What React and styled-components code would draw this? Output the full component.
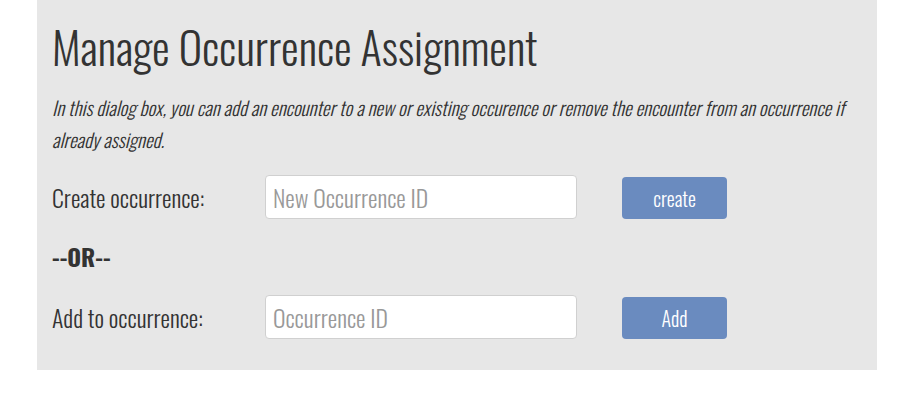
import React from "react";
import styled, { createGlobalStyle } from "styled-components";

const Global = createGlobalStyle`
  html, body { margin: 0; padding: 0; background: #fff; }
  body { font-family: "Oswald", "Roboto Condensed", "Liberation Sans", sans-serif; font-weight: 300; color: #333; }
`;

const Panel = styled.div`
  margin-left: 37px;
  width: 840px;
  height: 370px;
  box-sizing: border-box;
  background: #e7e7e7;
  padding: 16px 15px 0 15px;
`;

const Title = styled.h2`
  margin: 0;
  font-size: 44.5px;
  font-weight: 300;
  line-height: 60px;
  color: #333;
`;

const Intro = styled.p`
  margin: 16px 0 0;
  font-style: italic;
  font-size: 19.3px;
  line-height: 32px;
  color: #333;
`;

const Row = styled.div`
  display: flex;
  align-items: flex-end;
  margin-top: ${(p) => p.$mt}px;
`;

const Label = styled.label`
  align-self: center;
  width: 213px;
  font-size: 23.8px;
`;

const Input = styled.input`
  width: 312px;
  height: 44px;
  box-sizing: border-box;
  border: 1px solid #d0d0d0;
  border-radius: 4px;
  background: #fff;
  padding: 0 7px;
  font-family: inherit;
  font-weight: 300;
  font-size: 23.8px;
  color: #333;
  &::placeholder { color: #999; }
`;

const Button = styled.button`
  margin-left: 45px;
  width: 105px;
  height: 42px;
  border: none;
  border-radius: 4px;
  background: #6a8bbf;
  color: #fff;
  font-family: inherit;
  font-weight: 300;
  font-size: 20px;
`;

const Or = styled.div`
  margin-top: 18px;
  font-size: 23.6px;
  font-weight: 700;
  line-height: 40px;
`;

export default function App() {
  return (
    <>
      <Global />
      <Panel>
        <Title>Manage Occurrence Assignment</Title>
        <Intro>
          In this dialog box, you can add an encounter to a new or existing occurence or remove the encounter from an occurrence if already assigned.
        </Intro>
        <Row $mt={19}>
          <Label>Create occurrence:</Label>
          <Input placeholder="New Occurrence ID" />
          <Button>create</Button>
        </Row>
        <Or>--OR--</Or>
        <Row $mt={18}>
          <Label>Add to occurrence:</Label>
          <Input placeholder="Occurrence ID" />
          <Button>Add</Button>
        </Row>
      </Panel>
    </>
  );
}
